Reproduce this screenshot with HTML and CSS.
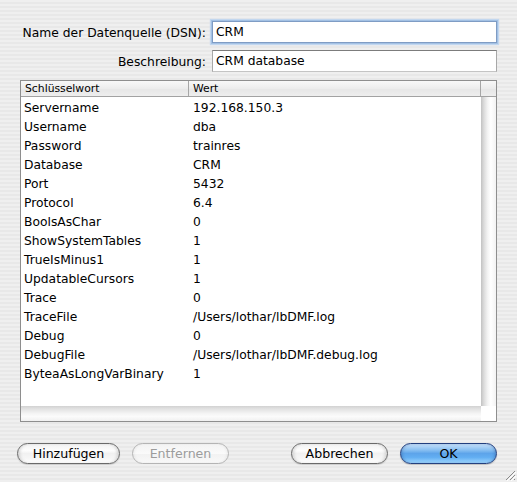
FILE: index.html
```html
<!DOCTYPE html>
<html lang="de">
<head>
<meta charset="utf-8">
<title>DSN</title>
<link rel="stylesheet" href="styles.css">
</head>
<body>
<div class="dialog">
  <div class="form">
    <label class="lbl">Name der Datenquelle (DSN):</label>
    <div class="field focus">CRM</div>
    <label class="lbl">Beschreibung:</label>
    <div class="field">CRM database</div>
  </div>

  <div class="table">
    <div class="thead">
      <div class="th k">Schlüsselwort</div>
      <div class="th v">Wert</div>
      <div class="th corner"></div>
    </div>
    <div class="tbody">
      <div class="rows">
        <div class="row"><span class="k">Servername</span><span class="v">192.168.150.3</span></div>
        <div class="row"><span class="k">Username</span><span class="v">dba</span></div>
        <div class="row"><span class="k">Password</span><span class="v">trainres</span></div>
        <div class="row"><span class="k">Database</span><span class="v">CRM</span></div>
        <div class="row"><span class="k">Port</span><span class="v">5432</span></div>
        <div class="row"><span class="k">Protocol</span><span class="v">6.4</span></div>
        <div class="row"><span class="k">BoolsAsChar</span><span class="v">0</span></div>
        <div class="row"><span class="k">ShowSystemTables</span><span class="v">1</span></div>
        <div class="row"><span class="k">TrueIsMinus1</span><span class="v">1</span></div>
        <div class="row"><span class="k">UpdatableCursors</span><span class="v">1</span></div>
        <div class="row"><span class="k">Trace</span><span class="v">0</span></div>
        <div class="row"><span class="k">TraceFile</span><span class="v">/Users/lothar/lbDMF.log</span></div>
        <div class="row"><span class="k">Debug</span><span class="v">0</span></div>
        <div class="row"><span class="k">DebugFile</span><span class="v">/Users/lothar/lbDMF.debug.log</span></div>
        <div class="row"><span class="k">ByteaAsLongVarBinary</span><span class="v">1</span></div>
      </div>
      <div class="vscroll"></div>
    </div>
    <div class="hbar">
      <div class="hscroll"></div>
      <div class="sq"></div>
    </div>
  </div>

  <div class="buttons">
    <div class="group">
      <div class="btn wide">Hinzufügen</div>
      <div class="btn disabled">Entfernen</div>
    </div>
    <div class="group">
      <div class="btn">Abbrechen</div>
      <div class="btn default">OK</div>
    </div>
  </div>
</div>
<svg class="grip" width="12" height="12" viewBox="0 0 12 12">
  <path d="M11 2 L2 11" stroke="#8a8a8a" stroke-width="1"/>
  <path d="M12 3 L3 12" stroke="#ffffff" stroke-width="1"/>
  <path d="M11 6 L6 11" stroke="#8a8a8a" stroke-width="1"/>
  <path d="M12 7 L7 12" stroke="#ffffff" stroke-width="1"/>
  <path d="M11 10 L10 11" stroke="#8a8a8a" stroke-width="1"/>
</svg>
</body>
</html>
```

FILE: styles.css
```css
html, body {
  margin: 0;
  padding: 0;
}

body {
  width: 517px;
  height: 482px;
  overflow: hidden;
  position: relative;
  background: repeating-linear-gradient(to bottom, #efefef 0, #efefef 2px, #e8e8e8 2px, #e8e8e8 4px);
  font-family: "DejaVu Sans", "Noto Sans", sans-serif;
  font-size: 12.3px;
  color: #000;
}

.dialog {
  padding: 21px 20px 0 20px;
}

.form {
  display: grid;
  grid-template-columns: 1fr 285px;
  column-gap: 6px;
  row-gap: 7px;
  align-items: center;
}

.lbl {
  text-align: right;
  font-size: 12.3px;
  white-space: nowrap;
  padding-top: 1px;
}

.field {
  height: 22px;
  box-sizing: border-box;
  background: #fff;
  border: 1px solid #a8a8a8;
  border-top-color: #7c7c7c;
  border-bottom-color: #c4c4c4;
  padding: 0 3px;
  line-height: 20px;
  white-space: nowrap;
}

.field.focus {
  border-color: #7f9cc4;
  box-shadow: 0 0 0 1px #a3c1e4, 0 0 1px 2px #c2d7ef;
}

.table {
  margin-top: 8px;
  height: 342px;
  box-sizing: border-box;
  border: 1px solid #8e8e8e;
  background: #fff;
  display: flex;
  flex-direction: column;
}

.thead {
  display: flex;
  height: 16px;
  box-sizing: border-box;
  border-bottom: 1px solid #a2a2a2;
  background: linear-gradient(to bottom, #f8f8f8, #ececec 50%, #e6e6e6 51%, #eeeeee);
  font-size: 10.8px;
  line-height: 15px;
}

.th {
  box-sizing: border-box;
  white-space: nowrap;
}

.th.k {
  width: 168px;
  padding-left: 4px;
  border-right: 1px solid #a6a6a6;
}

.th.v {
  flex: 1;
  padding-left: 4px;
}

.th.corner {
  width: 16px;
  border-left: 1px solid #a6a6a6;
}

.tbody {
  flex: 1;
  display: flex;
  min-height: 0;
}

.rows {
  flex: 1;
  padding-top: 2px;
}

.row {
  display: flex;
  height: 19px;
  line-height: 19px;
  white-space: nowrap;
}

.row .k {
  width: 168px;
  box-sizing: border-box;
  padding-left: 3px;
}

.row .v {
  padding-left: 4px;
}

.vscroll {
  width: 15px;
  background: linear-gradient(to right, #c2c2c2 0, #dcdcdc 20%, #f4f4f4 45%, #ffffff 65%, #f3f3f3 100%);
}

.hbar {
  display: flex;
  height: 15px;
}

.hscroll {
  flex: 1;
  background: linear-gradient(to bottom, #d2d2d2 0, #e2e2e2 20%, #f4f4f4 50%, #fbfbfb 70%, #f0f0f0 100%);
}

.sq {
  width: 15px;
  background: #fff;
}

.buttons {
  margin-top: 21px;
  margin-left: -3px;
  display: flex;
  justify-content: space-between;
}

.group {
  display: flex;
  gap: 12px;
}

.btn {
  width: 97px;
  height: 21px;
  box-sizing: border-box;
  border: 1px solid #6a6a6a;
  border-radius: 11px;
  text-align: center;
  line-height: 19px;
  font-size: 12.6px;
  background: linear-gradient(to bottom, #f2f2f2 0, #fdfdfd 35%, #f1f1f1 50%, #f6f6f6 75%, #ffffff 100%);
  box-shadow: inset 3px 0 3px -1px rgba(0, 0, 0, 0.12), inset -3px 0 3px -1px rgba(0, 0, 0, 0.12), 0 1px 1px rgba(0, 0, 0, 0.15);
}

.btn.wide {
  width: 103px;
}

.btn.disabled {
  color: #9c9c9c;
  border-color: #b4b4b4;
  background: linear-gradient(to bottom, #f3f3f3, #fafafa 50%, #f2f2f2 51%, #f8f8f8);
  box-shadow: inset 2px 0 3px -1px rgba(0, 0, 0, 0.06), inset -2px 0 3px -1px rgba(0, 0, 0, 0.06);
}

.btn.default {
  border-color: #23407f;
  background: linear-gradient(to bottom, #c6e0fa 0, #8dc2f2 30%, #5da4ea 50%, #62aef2 70%, #9ed6ff 100%);
  box-shadow: inset 2px 0 3px -1px rgba(0, 30, 90, 0.25), inset -2px 0 3px -1px rgba(0, 30, 90, 0.25), 0 1px 1px rgba(0, 0, 0, 0.2);
}

.grip {
  position: absolute;
  right: 1px;
  bottom: 1px;
}
```
